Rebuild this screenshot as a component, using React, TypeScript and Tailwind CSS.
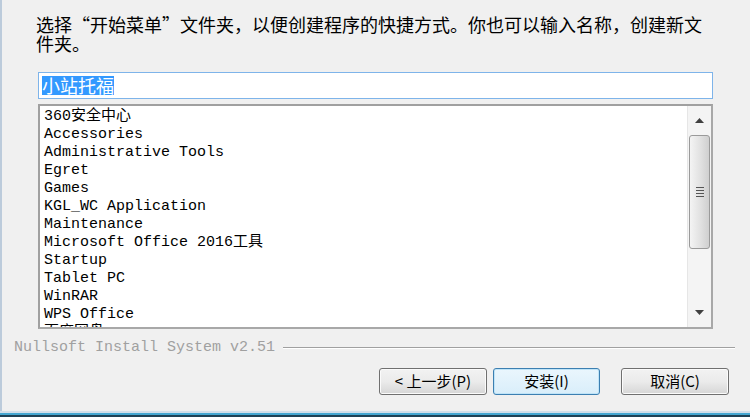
const folders = [
  "360安全中心",
  "Accessories",
  "Administrative Tools",
  "Egret",
  "Games",
  "KGL_WC Application",
  "Maintenance",
  "Microsoft Office 2016工具",
  "Startup",
  "Tablet PC",
  "WinRAR",
  "WPS Office",
  "百度网盘",
];

const mono = "[font-family:'Liberation_Mono','Noto_Sans_CJK_SC',monospace]";

function ScrollBar() {
  return (
    <div className="flex w-[24px] flex-col border-l border-[#e6e6e6] bg-[#f4f4f4]">
      <div className="flex h-[29px] items-center justify-center">
        <svg width="9" height="5" viewBox="0 0 9 5">
          <path d="M0 5 L4.5 0 L9 5 Z" fill="#404040" />
        </svg>
      </div>
      <div className="mx-[1px] flex h-[114px] items-center justify-center rounded-[3px] border border-[#9a9a9a] bg-gradient-to-r from-[#f4f4f4] via-[#e3e3e3] to-[#cfcfcf]">
        <div className="flex flex-col gap-[2px]">
          <div className="h-[1px] w-[8px] bg-[#555]" />
          <div className="h-[1px] w-[8px] bg-[#555]" />
          <div className="h-[1px] w-[8px] bg-[#555]" />
          <div className="h-[1px] w-[8px] bg-[#555]" />
        </div>
      </div>
      <div className="flex-1" />
      <div className="flex h-[29px] items-center justify-center">
        <svg width="9" height="5" viewBox="0 0 9 5">
          <path d="M0 0 L9 0 L4.5 5 Z" fill="#404040" />
        </svg>
      </div>
    </div>
  );
}

function Btn({ label, focused }: { label: string; focused?: boolean }) {
  return (
    <button
      className={
        focused
          ? "flex h-[27px] w-[107px] items-center justify-center rounded-[3px] border border-[#3c7fb1] bg-gradient-to-b from-[#eaf6fd] to-[#d9eefa] text-[15px] text-black shadow-[inset_0_0_0_1px_#bfe4f8]"
          : "flex h-[27px] w-[108px] items-center justify-center rounded-[3px] border border-[#707070] bg-gradient-to-b from-[#f2f2f2] via-[#ebebeb] to-[#d6d6d6] text-[15px] text-black shadow-[inset_0_0_0_1px_#fbfbfb]"
      }
    >
      {label}
    </button>
  );
}

export default function App() {
  return (
    <div className="flex h-[417px] w-[750px] flex-col overflow-hidden bg-[#f0f0f0] font-['Noto_Sans_CJK_SC',sans-serif]">
      <div className="flex flex-1 flex-col border-l-2 border-[#bccbdb]">
        <p className="ml-[34px] mt-[15px] w-[680px] text-[18px] leading-[19px] text-black">
          选择“开始菜单”文件夹，以便创建程序的快捷方式。你也可以输入名称，创建新文件夹。
        </p>

        <div className="ml-[36px] mt-[19px] flex h-[27px] w-[675px] items-center border border-[#7eb4ea] bg-white px-[3px]">
          <span className="bg-[#3399ff] text-[18px] leading-[19px] text-white">小站托福</span>
        </div>

        <div className="ml-[36px] mt-[5px] flex h-[225px] w-[675px] border-2 border-t-[#a0a0a0] border-l-[#a0a0a0] border-b-[#a8a8a8] border-r-[#a8a8a8] bg-white">
          <ul className={`flex-1 overflow-hidden pl-[4px] pt-[2px] text-[15px] leading-[18px] text-black ${mono}`}>
            {folders.map((f) => (
              <li key={f} className="whitespace-pre">
                {f}
              </li>
            ))}
          </ul>
          <ScrollBar />
        </div>

        <div className="ml-[12px] mt-[10px] mr-[15px] flex items-center gap-[8px]">
          <span className={`whitespace-pre text-[15px] leading-[18px] text-[#a0a0a0] ${mono}`}>
            Nullsoft Install System v2.51
          </span>
          <div className="h-[2px] flex-1 border-t border-b border-t-[#a0a0a0] border-b-white" />
        </div>

        <div className="mr-[21px] mt-[11px] flex justify-end">
          <div className="flex gap-[6px]">
            <Btn label="< 上一步(P)" />
            <Btn label="安装(I)" focused />
          </div>
          <div className="ml-[21px]">
            <Btn label="取消(C)" />
          </div>
        </div>
      </div>
      <div className="h-[2px] bg-[#d3dfe9]" />
      <div className="h-[2px] bg-[#45a7d1]" />
      <div className="h-[2px] bg-[#1f4256]" />
    </div>
  );
}
